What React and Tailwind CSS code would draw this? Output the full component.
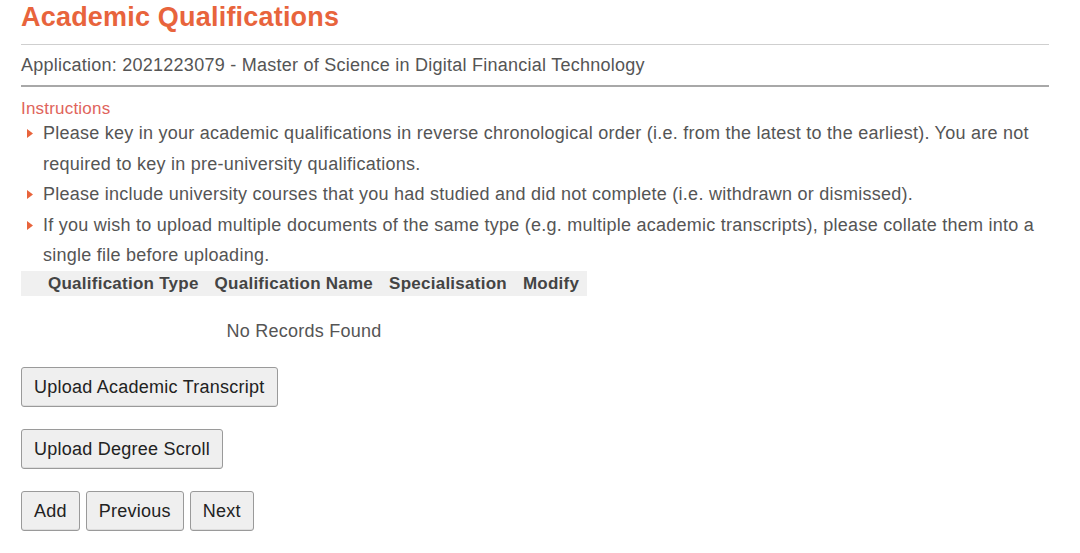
export default function App() {
  const bullets = [
    'Please key in your academic qualifications in reverse chronological order (i.e. from the latest to the earliest). You are not required to key in pre-university qualifications.',
    'Please include university courses that you had studied and did not complete (i.e. withdrawn or dismissed).',
    'If you wish to upload multiple documents of the same type (e.g. multiple academic transcripts), please collate them into a single file before uploading.',
  ];
  const btn = 'h-[40px] px-[12px] bg-[#efefef] border border-[#9a9a9a] rounded-[3px] text-[18px] tracking-[0.25px] text-[#222] shadow-[inset_0_-1px_0_#ddd]';

  return (
    <div className="min-h-screen bg-white pl-[21px] pr-[31px] pt-[1px] font-['Liberation_Sans',Arial,sans-serif]">
      <h1 className="text-[27px] tracking-[0.2px] leading-[32px] font-bold text-[#e8643c] mb-[11px]">Academic Qualifications</h1>
      <div className="border-t border-[#cfcfcf] border-b-2 border-b-[#a8a8a8] py-[10px] text-[18px] tracking-[0.25px] leading-[20px] text-[#555]">
        Application: 2021223079 - Master of Science in Digital Financial Technology
      </div>
      <div className="mt-[11px] text-[17px] tracking-[0.2px] leading-[22px] text-[#e0645c]">Instructions</div>
      <ul className="-mt-[2px] text-[18px] tracking-[0.25px] leading-[30.5px] text-[#555]">
        {bullets.map(b => (
          <li key={b} className="flex">
            <span className="w-[22px] shrink-0 pl-[6px] pt-[11px]">
              <svg width="6" height="9" viewBox="0 0 6 9"><path d="M0 0L6 4.5L0 9Z" fill="#e8643c" /></svg>
            </span>
            <span>{b}</span>
          </li>
        ))}
      </ul>
      <table className="text-[17px] tracking-[0.25px] text-[#444] border-collapse">
        <thead>
          <tr className="bg-[#f0f0f0]">
            {['Qualification Type', 'Qualification Name', 'Specialisation', 'Modify'].map((h, i) => (
              <th key={h} className={`font-bold h-[25px] text-left ${i === 0 ? 'pl-[27px] pr-[8px]' : 'px-[8px]'}`}>{h}</th>
            ))}
          </tr>
        </thead>
        <tbody>
          <tr>
            <td colSpan={4} className="text-center text-[18px] text-[#555] pt-[25px] pb-[25px] leading-[20px]">No Records Found</td>
          </tr>
        </tbody>
      </table>
      <div className="flex flex-col items-start gap-[22px] mt-[1px]">
        <button className={btn}>Upload Academic Transcript</button>
        <button className={btn}>Upload Degree Scroll</button>
        <div className="flex gap-[6px]">
          <button className={btn}>Add</button>
          <button className={btn}>Previous</button>
          <button className={btn}>Next</button>
        </div>
      </div>
    </div>
  );
}
